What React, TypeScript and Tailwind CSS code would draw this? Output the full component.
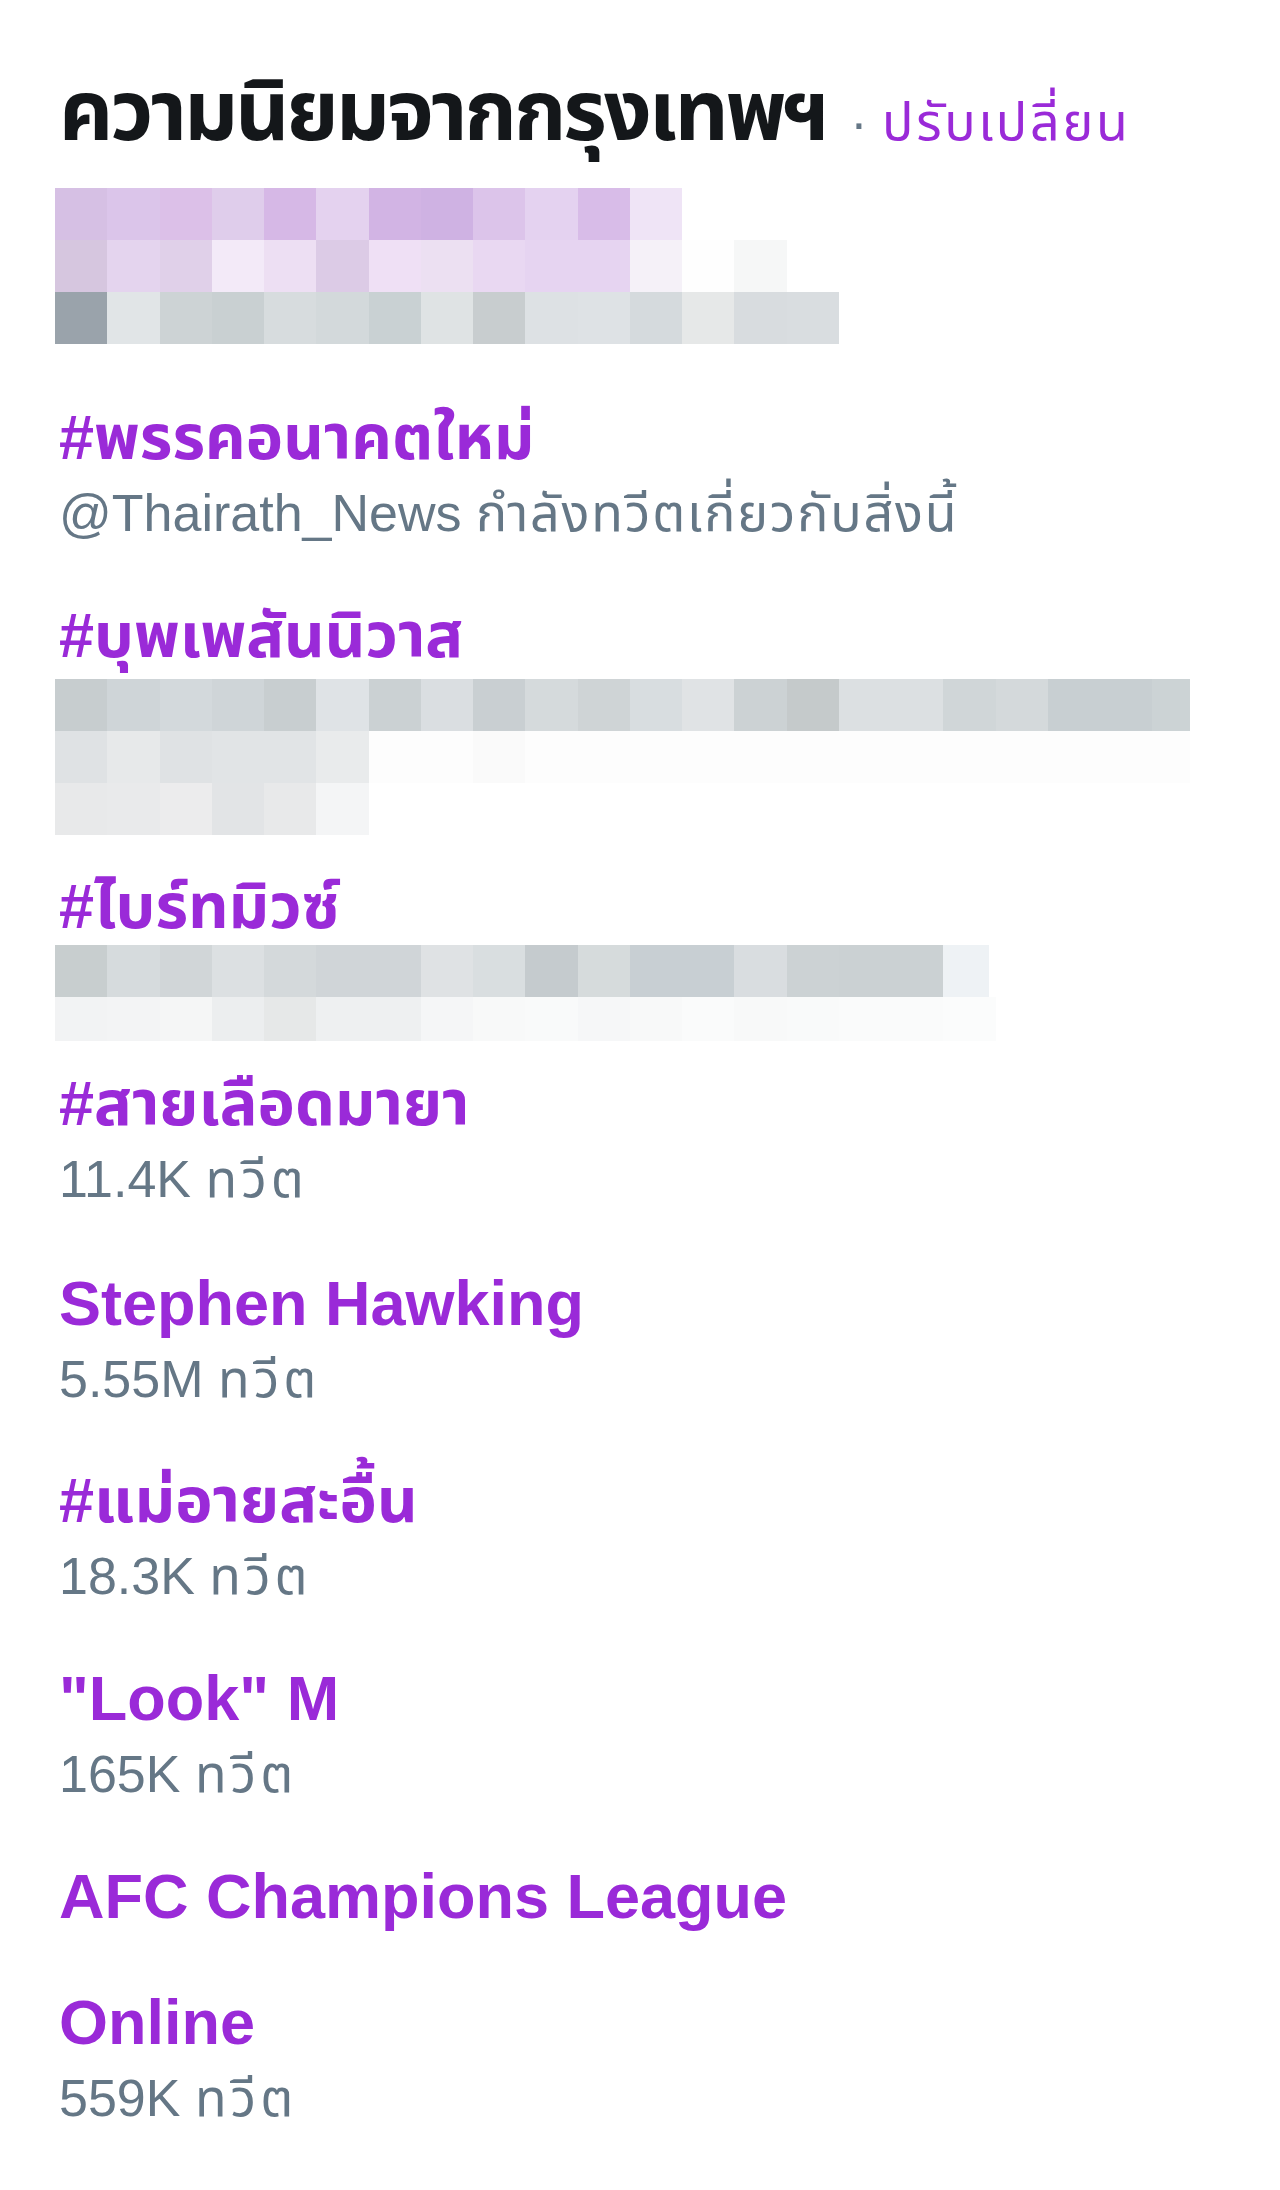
import React from "react";

const b1r1 = ["bg-[#d6c0e4]","bg-[#dbc5ea]","bg-[#dcc0e8]","bg-[#dfcdeb]","bg-[#d6b8e6]","bg-[#e4d2ef]","bg-[#d2b4e4]","bg-[#cfb2e3]","bg-[#dcc4ea]","bg-[#e4d2f0]","bg-[#d8bce8]","bg-[#efe4f6]"];
const b1r2 = ["bg-[#d6c6df]","bg-[#e4d4ee]","bg-[#e0d0e9]","bg-[#f3eaf8]","bg-[#eddff3]","bg-[#dccbe6]","bg-[#efe0f5]","bg-[#ece0f2]","bg-[#e9d8f2]","bg-[#e6d4f1]","bg-[#e6d4f1]","bg-[#f5f1f8]","bg-[#fefefe]","bg-[#f6f7f7]"];
const b1r3 = ["bg-[#9aa3ab]","bg-[#e1e5e7]","bg-[#cdd3d5]","bg-[#c9d0d2]","bg-[#d7dcde]","bg-[#d3d9db]","bg-[#c9d1d3]","bg-[#dfe3e4]","bg-[#c8cdcf]","bg-[#dde1e4]","bg-[#dee2e5]","bg-[#d5dadd]","bg-[#e6e8e8]","bg-[#d8dcdf]","bg-[#d9dde0]"];

const b2r1 = ["bg-[#c7cdcf]","bg-[#cfd5d8]","bg-[#d3d9dc]","bg-[#cfd5d8]","bg-[#c8ced0]","bg-[#dfe3e6]","bg-[#cbd1d3]","bg-[#dadee1]","bg-[#c9cfd2]","bg-[#d5dadc]","bg-[#cfd4d6]","bg-[#d8dde0]","bg-[#e0e3e5]","bg-[#ccd2d4]","bg-[#c5cacb]","bg-[#dce0e2]","bg-[#dce0e2]","bg-[#d0d6d8]","bg-[#d4d9db]","bg-[#c8cfd2]","bg-[#c8cfd2]"];
const b2r2 = ["bg-[#dfe2e4]","bg-[#e7e9ea]","bg-[#dfe2e4]","bg-[#e1e4e6]","bg-[#e1e4e6]","bg-[#e9ebec]","bg-[#fdfdfd]","bg-[#fdfdfd]","bg-[#fafafa]","bg-[#fdfdfd]","bg-[#fdfdfd]","bg-[#fdfdfd]","bg-[#fdfdfd]","bg-[#fdfdfd]","bg-[#fdfdfd]","bg-[#fdfdfd]","bg-[#fdfdfd]","bg-[#fdfdfd]","bg-[#fdfdfd]","bg-[#fdfdfd]","bg-[#fdfdfd]"];
const b2r3 = ["bg-[#e8e9ea]","bg-[#e9eaeb]","bg-[#ececed]","bg-[#e2e4e6]","bg-[#e8e9ea]","bg-[#f4f5f6]"];

const b3r1 = ["bg-[#c8cecf]","bg-[#d6dbdd]","bg-[#d1d6d8]","bg-[#dce0e2]","bg-[#d4d9db]","bg-[#d0d5d8]","bg-[#d0d5d8]","bg-[#dfe2e4]","bg-[#d9dee0]","bg-[#c5cbce]","bg-[#d6dbdc]","bg-[#c8cfd3]","bg-[#c8cfd3]","bg-[#d9dde0]","bg-[#ccd2d4]","bg-[#cbd1d3]","bg-[#cbd1d3]"];
const b3r2 = ["bg-[#f2f3f4]","bg-[#f3f4f5]","bg-[#f5f6f6]","bg-[#eceeef]","bg-[#e6e8e8]","bg-[#eef0f1]","bg-[#eef0f1]","bg-[#f5f6f7]","bg-[#f8f9f9]","bg-[#f9fafa]","bg-[#f6f7f8]","bg-[#f8f9f9]","bg-[#fafbfb]","bg-[#f8f9f9]","bg-[#f9fafa]","bg-[#fafbfb]","bg-[#fafbfb]","bg-[#fbfcfc]"];

function Row({ cells, tall = true, tail }: { cells: string[]; tall?: boolean; tail?: string }) {
  return (
    <div className={tall ? "flex h-[52px]" : "flex h-[44px]"}>
      {cells.map((c, i) => (
        <div key={i} className={"w-[52.25px] shrink-0 " + c} />
      ))}
      {tail ? <div className={"shrink-0 " + tail} /> : null}
    </div>
  );
}

function Name({ children }: { children: React.ReactNode }) {
  return (
    <div className="h-[72px] text-[63px] leading-[72px] font-bold text-[#9a2ad8] whitespace-nowrap pl-[4px]">
      {children}
    </div>
  );
}

function Sub({ children }: { children: React.ReactNode }) {
  return (
    <div className="mt-[4px] h-[72px] text-[52px] leading-[72px] text-[#657786] whitespace-nowrap pl-[4px]">
      {children}
    </div>
  );
}

function Count({ n }: { n: string }) {
  return (
    <Sub>
      {n} <span className="tracking-[4px]">ทวีต</span>
    </Sub>
  );
}

export default function App() {
  return (
    <div className="w-[1280px] h-[2190px] bg-white pt-[61px] pl-[55px] font-['Liberation_Sans','Noto_Sans_Thai','Noto_Sans',sans-serif] overflow-hidden">
      <div className="h-[100px] text-[84px] leading-[100px] whitespace-nowrap pl-[4px]">
        <span className="font-bold text-[#14171a] tracking-[-3px]">ความนิยมจากกรุงเทพฯ</span>
        <span className="ml-[24px] text-[52px] leading-[52px] text-[#657786]">· </span>
        <span className="text-[52px] leading-[52px] text-[#9a2ad8] tracking-[2.7px]">ปรับเปลี่ยน</span>
      </div>

      <div className="mt-[27px] flex flex-col">
        <Row cells={b1r1} />
        <Row cells={b1r2} />
        <Row cells={b1r3} />
      </div>

      <div className="mt-[57px]">
        <Name>#พรรคอนาคตใหม่</Name>
        <Sub>
          @Thairath_News <span className="tracking-[1.8px]">กำลังทวีตเกี่ยวกับสิ่งนี้</span>
        </Sub>
      </div>

      <div className="mt-[50px]">
        <Name>#บุพเพสันนิวาส</Name>
        <div className="mt-[8px] flex flex-col">
          <Row cells={b2r1} tail="w-[38px] bg-[#ccd3d5]" />
          <Row cells={b2r2} tail="w-[38px] bg-[#fdfdfd]" />
          <Row cells={b2r3} />
        </div>
      </div>

      <div className="mt-[35px]">
        <Name>#ไบร์ทมิวซ์</Name>
        <div className="mt-[3px] flex flex-col">
          <Row cells={b3r1} tail="w-[46px] bg-[#eef2f5]" />
          <Row cells={b3r2} tall={false} />
        </div>
      </div>

      <div className="mt-[26px]">
        <Name>#สายเลือดมายา</Name>
        <Count n="11.4K" />
      </div>

      <div className="mt-[52px]">
        <Name>Stephen Hawking</Name>
        <Count n="5.55M" />
      </div>

      <div className="mt-[49px]">
        <Name>#แม่อายสะอื้น</Name>
        <Count n="18.3K" />
      </div>

      <div className="mt-[50px]">
        <Name>"Look" M</Name>
        <Count n="165K" />
      </div>

      <div className="mt-[50px]">
        <Name>AFC Champions League</Name>
      </div>

      <div className="mt-[54px]">
        <Name>Online</Name>
        <Count n="559K" />
      </div>
    </div>
  );
}
